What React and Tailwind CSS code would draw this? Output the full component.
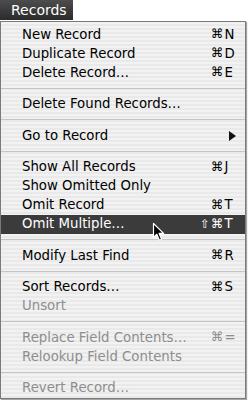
import React from 'react';

const items = [
  { label: 'New Record', mod: '', key: 'N' },
  { label: 'Duplicate Record', mod: '', key: 'D' },
  { label: 'Delete Record…', mod: '', key: 'E' },
  'sep',
  { label: 'Delete Found Records…' },
  'sep',
  { label: 'Go to Record', submenu: true },
  'sep',
  { label: 'Show All Records', mod: '', key: 'J' },
  { label: 'Show Omitted Only' },
  { label: 'Omit Record', mod: '', key: 'T' },
  { label: 'Omit Multiple…', mod: '⇧', key: 'T', active: true },
  'sep',
  { label: 'Modify Last Find', mod: '', key: 'R' },
  'sep',
  { label: 'Sort Records…', mod: '', key: 'S' },
  { label: 'Unsort', disabled: true },
  'sep',
  { label: 'Replace Field Contents…', mod: '', key: '=', disabled: true },
  { label: 'Relookup Field Contents', disabled: true },
  'sep',
  { label: 'Revert Record…', disabled: true },
];

function Cursor() {
  return (
    <svg className="absolute left-[151px] top-[7px]" width="13" height="20" viewBox="0 0 13 20">
      <path
        d="M1.5 1.5 L1.5 15.5 L4.8 12.3 L7.4 18.2 L9.6 17.2 L7.1 11.4 L11.6 11.4 Z"
        fill="#000"
        stroke="#fff"
        strokeWidth="1.2"
        strokeLinejoin="round"
      />
    </svg>
  );
}

function Row({ item }) {
  const color = item.active ? 'text-white' : item.disabled ? 'text-[#8e8e8e]' : 'text-black';
  return (
    <div
      className={`relative flex h-[19px] items-center pl-[21px] ${color} ${
        item.active ? 'bg-[#3b3b3b]' : ''
      }`}
    >
      <span className="flex-1 whitespace-nowrap">{item.label}</span>
      <div className="mr-[6px] flex w-[42px] items-center pr-[3px]">
        {item.key && (
          <>
            <span className="w-[14px] pr-[1px] text-right text-[12px]">{item.mod}</span>
            <span className="text-[12.5px]">⌘</span>
            <span className="ml-[1px]">{item.key}</span>
          </>
        )}
        {item.submenu && (
          <svg className="ml-[32px]" width="7" height="10" viewBox="0 0 7 10">
            <path d="M0 0 L7 5 L0 10 Z" fill="#111" />
          </svg>
        )}
      </div>
      {item.active && <Cursor />}
    </div>
  );
}

export default function App() {
  return (
    <div
      className="h-[400px] w-[248px] bg-white text-[13.3px] leading-none"
      style={{ fontFamily: '"DejaVu Sans", "Liberation Sans", sans-serif' }}
    >
      {/* menu title */}
      <div className="flex h-[21px]">
        <div className="flex h-[20px] w-[73px] items-center bg-gradient-to-b from-[#4d4d4d] to-[#2b2b2b] pl-[11px] text-[14px] text-white">
          Records
        </div>
      </div>

      {/* menu body */}
      <div className="w-[246px] border border-[#7a7a7a] bg-[repeating-linear-gradient(to_bottom,#f2f2f2_0px,#f2f2f2_2px,#e9e9e9_2px,#e9e9e9_4px)] pt-[3px] shadow-[1px_1px_1px_rgba(0,0,0,0.35)]">
        {items.map((item, i) =>
          item === 'sep' ? (
            <div key={i} className="flex h-[12.5px] items-center">
              <div className="h-px w-full bg-[#c4c4c4]" />
            </div>
          ) : (
            <Row key={i} item={item} />
          )
        )}
      </div>
    </div>
  );
}
